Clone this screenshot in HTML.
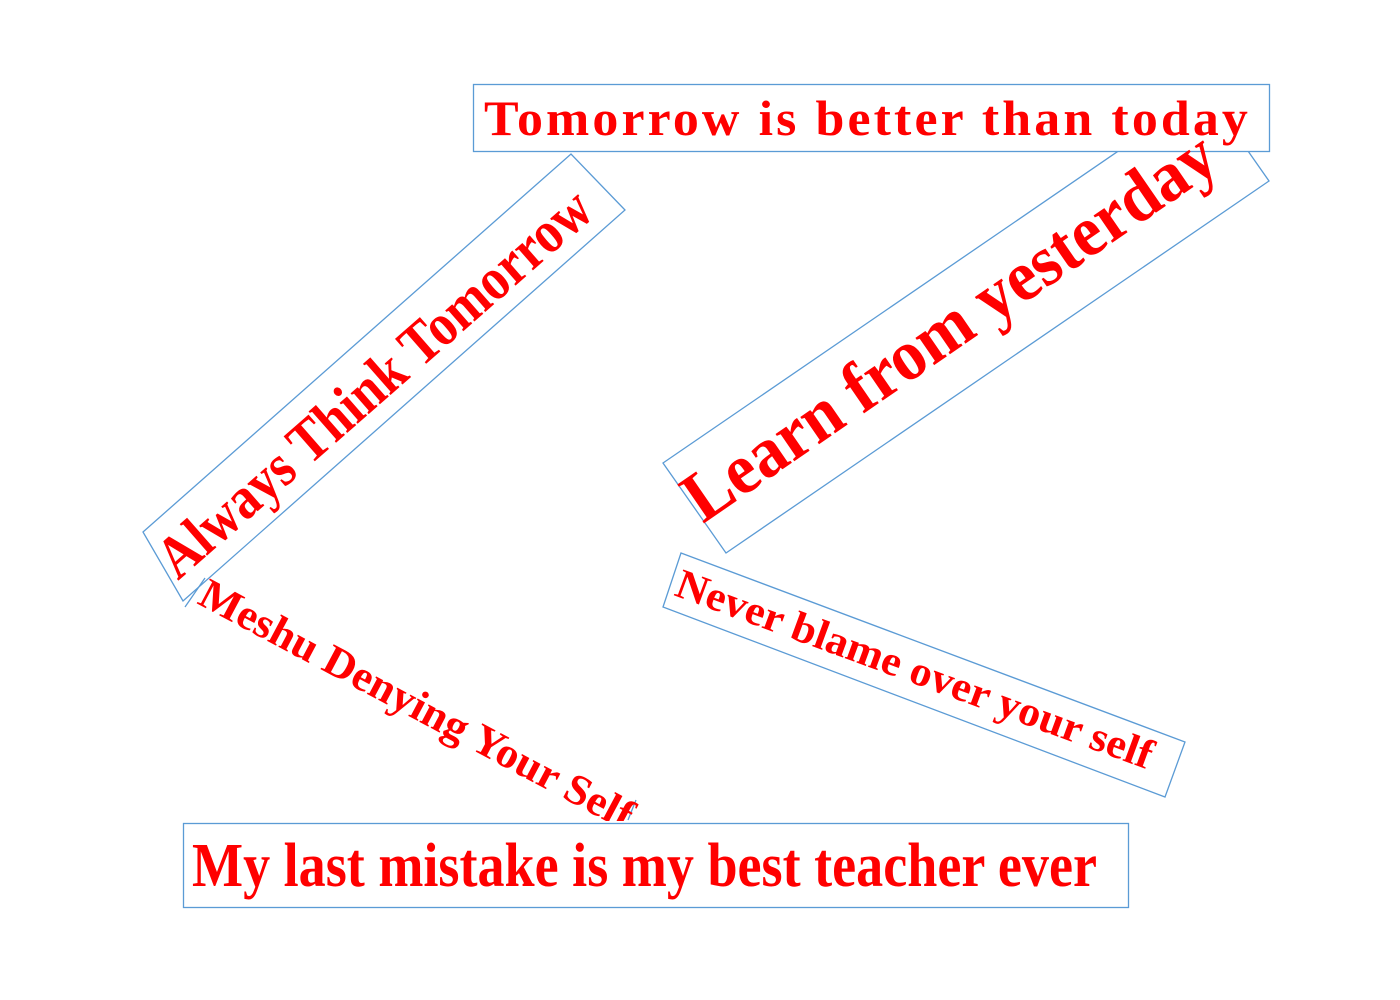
<!DOCTYPE html>
<html><head><meta charset="utf-8"><style>
html,body{margin:0;padding:0;background:#fff;width:1400px;height:1000px;overflow:hidden}
svg{display:block}
text{font-family:"Liberation Serif",serif;font-weight:bold;fill:#ff0000}
</style></head><body>
<svg width="1400" height="1000" viewBox="0 0 1400 1000" xmlns="http://www.w3.org/2000/svg">
<g fill="none" stroke="#5b9bd5" stroke-width="1.3">
<polygon points="663,463 1206,91 1269,181 726,553"/>
<rect x="473.5" y="84.5" width="796" height="67" fill="#fff"/>
<rect x="183.5" y="823.5" width="945" height="84"/>
<polygon points="143,532 571,154 625,210 183,601"/>
<polygon points="681,553 1185,742 1165,797 663,607"/>
<polyline points="185,607 205,578"/>
<polyline points="636,800 628,820"/>
</g>
<text x="484" y="135" font-size="50" letter-spacing="3" textLength="767" lengthAdjust="spacingAndGlyphs">Tomorrow is better than today</text>
<text x="192" y="886" font-size="62" textLength="905" lengthAdjust="spacingAndGlyphs">My last mistake is my best teacher ever</text>
<text transform="translate(178,581) rotate(-41.2)" font-size="60" textLength="556" lengthAdjust="spacingAndGlyphs">Always Think Tomorrow</text>
<text transform="translate(703,524) rotate(-34.5)" font-size="72" textLength="630" lengthAdjust="spacingAndGlyphs">Learn from yesterday</text>
<text transform="translate(673,595) rotate(20.2)" font-size="42" textLength="505" lengthAdjust="spacingAndGlyphs">Never blame over your self</text>
<clipPath id="c"><rect x="0" y="0" width="1400" height="821"/></clipPath>
<g clip-path="url(#c)">
<text transform="translate(196,603) rotate(28)" font-size="43" textLength="485" lengthAdjust="spacingAndGlyphs">Meshu Denying Your Self</text>
</g>
</svg>
</body></html>
